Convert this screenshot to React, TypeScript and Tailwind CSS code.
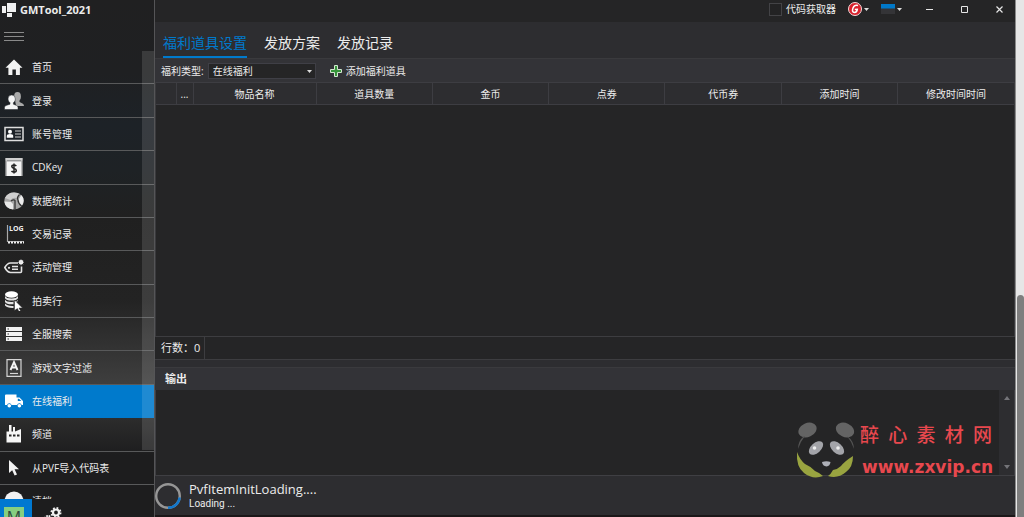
import React, { useState } from "react";

const HomeIcon = () => (
  <svg viewBox="0 0 18 18" className="h-[18px] w-[18px]" fill="#f2f2f2">
    <path d="M9 1.500 17.500 9.800h-2.600V17h-4v-5.500H7.400V17h-4V9.800H.5z" />
  </svg>
);

const UsersIcon = () => (
  <svg viewBox="0 0 20 20" className="h-5 w-5">
    <g fill="#a9a9a9">
      <ellipse cx="13.500" cy="5.500" rx="3.400" ry="4.400" />
      <path d="M11 9h4.500v2l3 1.500q1.500.6 1.500 2.500h-8z" />
    </g>
    <g fill="#f4f4f4" stroke="#20242a" strokeWidth=".5">
      <path d="M.5 18.500v-2q0-1.600 1.500-2l4-1.300v-1.500Q4 10.500 4 8q0-4 3.700-4t3.700 4q0 2.500-2 3.700v1.500l3.300 1.300q1.300.5 1.300 2v2z" />
    </g>
  </svg>
);

const CardIcon = () => (
  <svg viewBox="0 0 20 16" className="h-4 w-5">
    <rect x="1" y="1.500" width="18" height="13" fill="none" stroke="#dedede" strokeWidth="1.500" />
    <circle cx="6" cy="5.800" r="2" fill="#fff" />
    <path d="M2.800 11.800V10q0-1.900 3.200-1.900T9.200 10v1.800z" fill="#fff" />
    <path d="M11 5h6M11 8h6M11 11h6" stroke="#d0d0d0" strokeWidth="1.100" />
  </svg>
);

const KeyIcon = () => (
  <svg viewBox="0 0 18 18" className="h-[18px] w-[18px]">
    <path d="M.5 0h17v2.500H.5z" fill="#9b9b9b" />
    <path d="M1.500 3.200h15V18h-15z" fill="#f4f4f4" />
    <path d="M.5 0v18h1.200V2.500h14.600V18h1.200V0z" fill="#cfcfcf" />
    <path d="M11.300 7.900Q10.500 7 9 7 6.800 7 6.800 8.600q0 1.300 2.200 1.800 2.300.5 2.300 2Q11.300 14 9 14q-1.700 0-2.500-1M9 5.500v10" fill="none" stroke="#222" strokeWidth="1.500" />
  </svg>
);

const StatsIcon = () => (
  <svg viewBox="0 0 20 18" className="h-[18px] w-5">
    <ellipse cx="10" cy="9" rx="9.700" ry="8.500" fill="#a6a6a6" />
    <path d="M1 6Q3.500.5 10 .5q4 0 6 1.500L12.500 6Q9 5 6.500 8z" fill="#cfcfcf" />
    <path d="M.3 9.500 7 10l2 2v5.500Q1.500 17 .3 9.500z" fill="#e8e8e8" />
    <path d="M14.500 7.500 17.500 3q4 5 .5 10.500l-4-3z" fill="#ececec" />
    <path d="M7 9q3-2 4-.5V17.500M15.500 2.500q-3 3-1.500 5.500 0 3 3.500 6" stroke="#343434" strokeWidth="1.300" fill="none" />
  </svg>
);

const LogIcon = () => (
  <svg viewBox="0 0 20 20" className="h-5 w-5">
    <path d="M3.500 1v16.500H20" fill="none" stroke="#a9a9a9" strokeWidth="1.200" />
    <path d="M4 18.500h16" stroke="#f0f0f0" strokeWidth="2" strokeDasharray="2 1" />
    <text x="5" y="6.500" fontSize="7" fontWeight="700" fill="#eee" fontFamily="Open Sans, sans-serif">LOG</text>
  </svg>
);

const TagIcon = () => (
  <svg viewBox="0 0 20 16" className="h-4 w-5" fill="none" stroke="#e2e2e2">
    <path d="M14 4H6.500Q3.500 4 .8 8.500q2.700 5 5.700 5h10q1 0 1-1V7.500" strokeWidth="1.600" />
    <circle cx="5" cy="8.800" r="1.100" fill="#e2e2e2" stroke="none" />
    <path d="M8 7.500h6M8 10.300h6" strokeWidth="1.400" />
    <circle cx="17" cy="3.200" r="2.200" fill="#fff" stroke="none" />
    <path d="M17 .2v6M14 3.200h6M14.900 1.100l4.200 4.200M14.900 5.300l4.200-4.200" strokeWidth=".6" />
  </svg>
);

const AuctionIcon = () => (
  <svg viewBox="0 0 20 20" className="h-5 w-5">
    <ellipse cx="7.500" cy="3.500" rx="6.500" ry="3.200" fill="#fff" />
    <path d="M1 5v2.200Q2.500 9.500 7.500 9.500T14 7.200V5Q12.500 7.500 7.500 7.500T1 5zM1 8.800V11q1.500 2.300 6.500 2.300l2-.1V11l3.500-.2q1-.6 1-2Q12.500 11 7.500 11T1 8.800zM1 12.600v2q2 2.500 8.500 2.300V15Q3 15.300 1 12.600z" fill="#e4e4e4" />
    <path d="m10.500 9 8 8H15l1.700 3-1.700.8-1.600-3.200-2.900 2z" fill="#fff" stroke="#242424" strokeWidth=".5" />
  </svg>
);

const ServerIcon = () => (
  <svg viewBox="0 0 16 16" className="h-4 w-4">
    <path d="M0 1h16v4H0zM0 6h16v4H0zM0 11h16v4H0z" fill="#f2f2f2" />
    <path d="M1.500 3h1.500M1.500 8h1.500M1.500 13h1.500" stroke="#333" strokeWidth="1.200" />
  </svg>
);

const FilterIcon = () => (
  <svg viewBox="0 0 16 18" className="h-[18px] w-4" fill="none" stroke="#d6d6d6">
    <path d="M1 .7h14v16.600H1z" strokeWidth="1.200" />
    <path d="m4.500 11 3.500-8 3.500 8M6 8.500h4" stroke="#f4f4f4" strokeWidth="1.900" />
    <path d="M4 14.500h8" strokeWidth="1.200" />
  </svg>
);

const TruckIcon = () => (
  <svg viewBox="0 0 18 14" className="h-[14px] w-[18px]" fill="#fff">
    <path d="M0 1.500Q0 .5 1 .5h10.500v3h3L18 7v4h-1.300a2.400 2.400 0 0 0-4.600 0H6.600A2.400 2.400 0 0 0 2 11H0zM12.800 4.700V7h3.600L14 4.700z" fillRule="evenodd" />
    <circle cx="4.300" cy="11.700" r="1.800" />
    <circle cx="14.400" cy="11.700" r="1.800" />
  </svg>
);

const FactoryIcon = () => (
  <svg viewBox="0 0 16 18" className="h-[18px] w-4" fill="#f6f6f6">
    <path d="M3 0h2.500v6.500H7V2h2v4.500l6-2.500V17.500H.500V6.500H3z" />
    <path d="M3 9.500h2.500v2H3zM7 9.500h2.500v2H7zM11 9.500h2.500v2H11z" fill="#262626" />
  </svg>
);

const CursorIcon = () => (
  <svg viewBox="0 0 12 16" className="h-4 w-3" fill="#f2f2f2">
    <path d="M1 0v13l3.200-2.800 2.400 5.300 2.400-1.100L6.600 9.300H11z" />
  </svg>
);

const navItems = [
  { label: "首页", icon: <HomeIcon /> },
  { label: "登录", icon: <UsersIcon /> },
  { label: "账号管理", icon: <CardIcon /> },
  { label: "CDKey", icon: <KeyIcon /> },
  { label: "数据统计", icon: <StatsIcon /> },
  { label: "交易记录", icon: <LogIcon /> },
  { label: "活动管理", icon: <TagIcon /> },
  { label: "拍卖行", icon: <AuctionIcon /> },
  { label: "全服搜索", icon: <ServerIcon /> },
  { label: "游戏文字过滤", icon: <FilterIcon /> },
  { label: "在线福利", icon: <TruckIcon /> },
  { label: "频道", icon: <FactoryIcon /> },
  { label: "从PVF导入代码表", icon: <CursorIcon /> },
];

const tabs = ["福利道具设置", "发放方案", "发放记录"];
const columns = ["物品名称", "道具数量", "金币", "点券", "代币券", "添加时间", "修改时间时间"];

const Caret = () => (
  <svg viewBox="0 0 5 3" className="h-[3px] w-[5px]" fill="#dcdcdc">
    <path d="M0 0h5L2.500 3z" />
  </svg>
);

const Sidebar: React.FC = () => {
  const [active, setActive] = useState("在线福利");

  return (
    <aside className="flex w-[155px] shrink-0 flex-col border-r border-[#555557] bg-[linear-gradient(#202021_0%,#1f2022_14%,#1d2227_24%,#1e2225_33%,#202020_42%,#232323_58%,#3e3e3e_74%,#2c2c2c_81%,#1d1d1e_88%,#1d1d1e_100%)]">
      <div className="flex h-[51px] shrink-0 flex-col">
        <div className="flex h-5 items-center gap-1 pl-0.5">
          <svg viewBox="0 0 14 14" className="h-[14px] w-[14px]" fill="#f0f0f0">
            <path d="M5 0h9v9H5zM0 3h4v7H0zM5 10h5v4H5z" />
          </svg>
          <h1 className="text-[11px] leading-4 font-bold">GMTool_2021</h1>
        </div>
        <button type="button" aria-label="菜单" className="mt-2.5 ml-1 flex w-5 flex-col gap-[3px] py-0.5">
          <span className="h-px w-full bg-[#8a8a8a]" />
          <span className="h-px w-full bg-[#8a8a8a]" />
          <span className="h-px w-full bg-[#8a8a8a]" />
        </button>
      </div>

      <nav className="relative grid min-h-0 flex-1 auto-rows-fr">
        {navItems.map((item) => (
          <button
            key={item.label}
            type="button"
            onClick={() => setActive(item.label)}
            className={
              item.label === active
                ? "flex min-h-0 items-center gap-2 border-b border-[#0079cb] bg-[#007acc] pl-1 text-[10px] leading-4"
                : "flex min-h-0 items-center gap-2 border-b border-[#58595a] pl-1 text-[10px] leading-4"
            }
          >
            <span className="flex w-5 shrink-0 items-center justify-center">{item.icon}</span>
            <span className="whitespace-nowrap">{item.label}</span>
          </button>
        ))}
        <span className="pointer-events-none absolute top-0 right-0 h-[92%] w-3 bg-white/12" />
      </nav>

      {/* next entry, cut off by the footer */}
      <div className="flex h-[14px] shrink-0 items-start gap-2 overflow-hidden pl-1 text-[10px] leading-4">
        <svg viewBox="0 0 20 26" className="h-[26px] w-5 shrink-0" fill="#f2f2f2">
          <circle cx="10" cy="16" r="9.500" />
        </svg>
        <span className="pt-2">清档</span>
      </div>

      <div className="flex h-[18px] shrink-0 items-start overflow-hidden">
        <div className="flex h-8 w-8 shrink-0 bg-[#0078d0] pt-2 pl-1">
          <span className="h-5 w-5 bg-[#86cf80] text-center text-[16px] leading-5 text-[#2f4a3c]">M</span>
        </div>
        <svg viewBox="0 0 20 20" className="mt-2 ml-3 h-5 w-5" fill="none" stroke="#f2f2f2">
          <circle cx="12" cy="5.500" r="3" strokeWidth="2.200" />
          <circle cx="12" cy="5.500" r="4.600" strokeWidth="1.800" strokeDasharray="1.800 1.812" />
          <circle cx="4" cy="12" r="3" strokeWidth="2" strokeDasharray="1.600 .8" />
        </svg>
      </div>
    </aside>
  );
};

const TitleBar: React.FC = () => (
  <header className="flex h-[22px] shrink-0 items-start justify-end bg-[#252526] pt-px pr-2.5">
    <label className="mr-3 flex h-4 items-center gap-1 text-[10px] leading-4">
      <input type="checkbox" className="h-[13px] w-[13px] appearance-none border border-[#434346] bg-[#232324] checked:bg-[#007acc]" />
      代码获取器
    </label>
    <button type="button" aria-label="语言" className="mr-3 flex h-4 items-center gap-0.5">
      <svg viewBox="0 0 14 14" className="h-[14px] w-[14px]">
        <circle cx="7" cy="7" r="6.500" fill="#d8202b" stroke="#f3dada" />
        <path d="M10 3.500Q6.500 2.500 5 6q-1.500 4.200 1.500 4.500Q9 10.200 9.300 7.300L6.800 7.500" fill="none" stroke="#fff" strokeWidth="1.500" />
      </svg>
      <Caret />
    </button>
    <button type="button" aria-label="主题" className="mr-[22px] flex h-4 items-center gap-0.5">
      <svg viewBox="0 0 14 10" className="h-2.5 w-3.5">
        <path d="M0 0h14v10H0z" fill="#343437" />
        <path d="M0 0h14v4.500H0z" fill="#0078c8" />
      </svg>
      <Caret />
    </button>
    <div className="flex h-4 items-center gap-6">
      <button type="button" aria-label="最小化">
        <svg viewBox="0 0 11 11" className="h-[11px] w-[11px]">
          <path d="M2 5.500h7" stroke="#e6e6e6" />
        </svg>
      </button>
      <button type="button" aria-label="最大化">
        <svg viewBox="0 0 11 11" className="h-[11px] w-[11px]">
          <path d="M2.500 2.500h6v6h-6z" fill="none" stroke="#e6e6e6" />
        </svg>
      </button>
      <button type="button" aria-label="关闭">
        <svg viewBox="0 0 11 11" className="h-[11px] w-[11px]">
          <path d="m2.500 2.500 6 6m0-6-6 6" stroke="#e6e6e6" strokeWidth="1.200" />
        </svg>
      </button>
    </div>
  </header>
);

const Watermark: React.FC = () => (
  <div className="pointer-events-none absolute right-[22px] -bottom-2 flex items-center gap-1 text-[#e8484e]">
    <svg viewBox="0 0 60 60" className="h-[60px] w-[60px]">
      <ellipse cx="11.500" cy="9" rx="9.500" ry="7" transform="rotate(-25 11.500 9)" fill="#646464" />
      <ellipse cx="49" cy="9" rx="9.500" ry="7" transform="rotate(25 49 9)" fill="#646464" />
      <path d="M8 15Q2 20 2 28q2-7 7-13zM51 15q7 5 7 13-2-7-7-13z" fill="#555" />
      <ellipse cx="20" cy="27" rx="8.500" ry="5" transform="rotate(-42 20 27)" fill="#a3a4a9" />
      <ellipse cx="41" cy="27" rx="8.500" ry="5" transform="rotate(42 41 27)" fill="#a3a4a9" />
      <circle cx="18.500" cy="27" r="1.800" fill="#eee" />
      <circle cx="42" cy="27" r="1.800" fill="#eee" />
      <path d="M26 41q4.500-1.500 8.500 0-.5 4-4 4.500-4-.5-4.500-4.500z" fill="#aeb0b8" />
      <path d="M1 31q-1 15 7 21 9 7 19 3-3-3-8-5Q14 45 9 43 4 39 1 31z" fill="#99a440" />
      <path d="M57 35q0 11-7 16-8 7-18 4 3-2 5-6 5-1 8-4 4-5 12-10z" fill="#99a440" />
    </svg>
    <div className="w-[132px]">
      <div className="flex justify-between text-[19px] leading-8 font-medium">
        {"醉心素材网".split("").map((char) => (
          <span key={char}>{char}</span>
        ))}
      </div>
      <div className="pl-0.5 font-['DejaVu_Sans'] text-[17px] leading-8 font-bold">www.zxvip.cn</div>
    </div>
  </div>
);

const WelfarePanel: React.FC = () => {
  const [tab, setTab] = useState(tabs[0]);

  return (
    <>
      <div className="flex h-9 shrink-0 items-end gap-[17px] bg-[#2d2d30] pl-2">
        {tabs.map((name) => (
          <button
            key={name}
            type="button"
            onClick={() => setTab(name)}
            className={
              name === tab
                ? "border-b-2 border-[#007acc] pb-[3px] text-[14px] leading-5 text-[#007acc]"
                : "border-b-2 border-transparent pb-[3px] text-[14px] leading-5"
            }
          >
            {name}
          </button>
        ))}
      </div>

      <div className="flex h-6 shrink-0 items-center border-t border-[#3a3a3d] bg-[#333337] pl-1.5 text-[10px] leading-4">
        <label htmlFor="welfare-type" className="mr-1">福利类型:</label>
        <div className="relative">
          <select
            id="welfare-type"
            className="h-4 w-[108px] appearance-none border border-[#3f3f46] bg-[#252526] pl-1 text-[10px] leading-3"
          >
            <option>在线福利</option>
          </select>
          <span className="pointer-events-none absolute top-[7px] right-1">
            <Caret />
          </span>
        </div>
        <button type="button" className="ml-3.5 flex items-center gap-1">
          <svg viewBox="0 0 12 12" className="h-3 w-3">
            <path d="M4.500.5h3v4h4v3h-4v4h-3v-4h-4v-3h4z" fill="#37953b" stroke="#d3e6d1" />
          </svg>
          添加福利道具
        </button>
      </div>

      <div className="min-h-0 flex-1 overflow-hidden border-x border-[#3a3a3d] bg-[#252526]">
        <table className="w-full table-fixed border-collapse text-[10px] leading-4">
          <thead>
            <tr className="h-[22px] bg-[#2d2d30]">
              <th className="w-5 border-y border-r border-[#3d3d42]" />
              <th className="w-[17px] border border-[#3d3d42] p-0 font-normal">...</th>
              {columns.map((name, index) => (
                <th
                  key={name}
                  className={
                    index === 0
                      ? "w-[123px] border border-[#3d3d42] p-0 font-normal"
                      : "border-y border-l border-[#3d3d42] p-0 font-normal"
                  }
                >
                  {name}
                </th>
              ))}
            </tr>
          </thead>
          <tbody />
        </table>
      </div>

      <div className="flex h-6 shrink-0 border-y border-[#3d3d40] bg-[#252526] text-[11px]">
        <span className="flex items-center border-r border-[#3d3d40] pr-1 pl-1.5">行数：0</span>
      </div>
    </>
  );
};

const OutputPanel: React.FC = () => (
  <section className="mt-[7px] shrink-0">
    <label
      htmlFor="output"
      className="flex h-[23px] items-center border-t border-[#3a3a3d] bg-[#333337] pl-2.5 text-[11px] font-bold"
    >
      输出
    </label>
    <div className="relative flex h-[86px] border-x border-b border-[#3f3f43] bg-[#252526]">
      <textarea id="output" readOnly className="h-full min-w-0 flex-1 resize-none bg-transparent p-1 text-[10px] outline-none" />
      <div className="flex w-[15px] shrink-0 flex-col items-center justify-between bg-[#2d2d30] py-1.5">
        <svg viewBox="0 0 6 4" className="h-1 w-1.5" fill="#747478">
          <path d="M0 4h6L3 0z" />
        </svg>
        <svg viewBox="0 0 6 4" className="h-1 w-1.5" fill="#747478">
          <path d="M0 0h6L3 4z" />
        </svg>
      </div>
      <Watermark />
    </div>
  </section>
);

const StatusBar: React.FC = () => (
  <footer className="flex h-[41px] shrink-0 items-center gap-2 border-b-2 border-[#1b1718] bg-[#2d2d30] font-['Roboto','Noto_Sans_CJK_SC',sans-serif]">
    <svg viewBox="0 0 26 26" className="h-[26px] w-[26px]" fill="none" strokeWidth="2.400">
      <circle cx="13" cy="13" r="11.800" stroke="#969696" />
      <path d="M24.700 14.500A11.800 11.800 0 0 1 13 24.800" stroke="#1177cc" />
    </svg>
    <div>
      <p className="font-['Open_Sans'] text-[13px] leading-4">PvfItemInitLoading....</p>
      <p className="text-[10px] leading-[14px]">Loading ...</p>
    </div>
  </footer>
);

const App: React.FC = () => {
  return (
    <div className="flex h-screen overflow-hidden bg-[#2d2d30] font-['Open_Sans','Noto_Sans_CJK_SC',sans-serif] text-[#ececec]">
      <Sidebar />
      <main className="flex min-w-0 flex-1 flex-col border-r border-[#8a8a8a]">
        <TitleBar />
        <WelfarePanel />
        <OutputPanel />
        <StatusBar />
      </main>
      <div className="flex w-2 shrink-0 flex-col justify-end bg-[#e6e6e6] pl-px">
        <div className="h-[43%] rounded-t bg-[#7e7e7e]" />
      </div>
    </div>
  );
};

export default App;
